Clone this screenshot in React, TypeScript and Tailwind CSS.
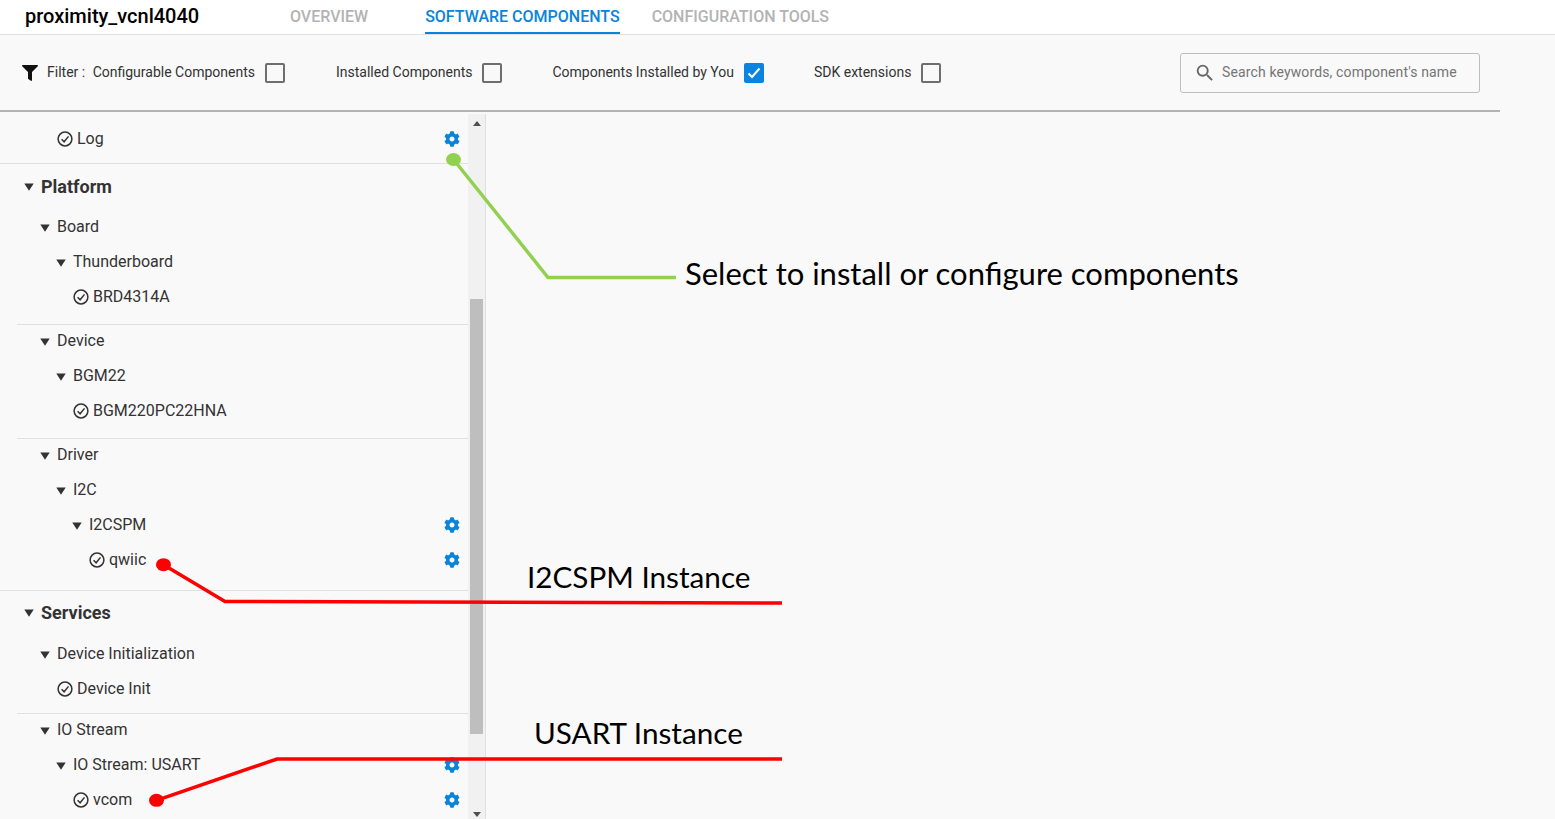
import React from "react";
import { FaCog, FaFilter } from "react-icons/fa";
import { MdSearch } from "react-icons/md";

function Tri({ className = "" }: { className?: string }) {
  return (
    <svg width="10" height="8" viewBox="0 0 10 8" className={"shrink-0 " + className}>
      <path d="M0.3 0.5H9.7L5 7.7Z" fill="#333333" />
    </svg>
  );
}

function CheckCircle() {
  return (
    <svg width="16" height="16" viewBox="0 0 16 16" className="shrink-0" fill="none" stroke="#333333">
      <circle cx="8" cy="8" r="6.9" strokeWidth="1.5" />
      <path d="M4.6 8.3L7.1 10.8L11.5 5.4" strokeWidth="1.5" />
    </svg>
  );
}

function Gear() {
  return <FaCog size={16} color="#0a84d9" className="shrink-0" />;
}

function Box({ checked = false }: { checked?: boolean }) {
  if (checked) {
    return (
      <span className="w-5 h-5 rounded-[2px] bg-[#0a84e0] flex items-center justify-center shrink-0">
        <svg width="14" height="12" viewBox="0 0 14 12" fill="none" stroke="#ffffff" strokeWidth="2">
          <path d="M1.5 6.5L5 10L12.5 1.5" />
        </svg>
      </span>
    );
  }
  return <span className="w-5 h-5 rounded-[2px] border-2 border-[#6e6e6e] shrink-0" />;
}

type RowProps = { label: string; indent: number; kind: "tri" | "check"; gear?: boolean };

function Row({ label, indent, kind, gear }: RowProps) {
  return (
    <div className="h-[35px] flex items-center pr-2 text-[16px] text-[#333333]" style={{ paddingLeft: indent }}>
      {kind === "tri" ? <Tri className="mr-[7px] mt-[2px]" /> : <CheckCircle />}
      <span className={kind === "tri" ? "" : "ml-1"}>{label}</span>
      {gear && (
        <span className="ml-auto">
          <Gear />
        </span>
      )}
    </div>
  );
}

function Heading({ label }: { label: string }) {
  return (
    <div className="h-[22px] flex items-center pl-6 text-[18px] font-bold text-[#333333]">
      <Tri className="mr-[7px] mt-[2px]" />
      <span>{label}</span>
    </div>
  );
}

function FilterItem({ label, checked, className = "" }: { label: string; checked?: boolean; className?: string }) {
  return (
    <div className={"flex items-center gap-[10px] " + className}>
      <span>{label}</span>
      <Box checked={checked} />
    </div>
  );
}

export default function App() {
  return (
    <div className="relative w-[1555px] h-[819px] overflow-hidden bg-[#f9f9f9] font-['Roboto',sans-serif]">
      <header className="h-[35px] bg-white border-b border-[#e0e0e0] flex">
        <div className="w-[290px] pl-[25px] text-[20px] font-medium text-black leading-[33px]">proximity_vcnl4040</div>
        <nav className="flex text-[16px] font-medium">
          <div className="text-[#b3b3b3] leading-[33px] mr-[57px]">OVERVIEW</div>
          <div className="text-[#0a84d9] leading-[33px] h-[34px] border-b-2 border-[#0a84d9] mr-8">SOFTWARE COMPONENTS</div>
          <div className="text-[#b3b3b3] leading-[33px]">CONFIGURATION TOOLS</div>
        </nav>
      </header>

      <div className="w-[1500px] h-[77px] border-b-2 border-[#b3b3b3] flex items-center pl-[22px] pr-5 text-[14px] text-[#333333]">
        <FaFilter size={16} color="#111111" className="shrink-0" />
        <span className="ml-[9px] mr-[7.5px]">Filter :</span>
        <FilterItem label="Configurable Components" className="mr-[51px]" />
        <FilterItem label="Installed Components" className="mr-[50px]" />
        <FilterItem label="Components Installed by You" checked className="mr-[50px]" />
        <FilterItem label="SDK extensions" />
        <div className="ml-auto w-[300px] h-10 rounded-[3px] border border-[#bdbdbd] flex items-center pl-[13px] text-[#757575]">
          <MdSearch size={22} color="#666666" className="shrink-0" />
          <span className="ml-[6px] tracking-[0.13px]">Search keywords, component's name</span>
        </div>
      </div>

      <div className="w-[486px] h-[708px] flex">
        <div className="w-[468px] shrink-0 overflow-hidden pt-[9px]">
          <Row label="Log" indent={57} kind="check" gear />
          <div className="h-px bg-[#e0e0e0] mt-[7px] mb-[11px]" />
          <Heading label="Platform" />
          <div className="h-[11px]" />
          <div className="pt-[1px]">
            <Row label="Board" indent={40} kind="tri" />
            <Row label="Thunderboard" indent={56} kind="tri" />
            <Row label="BRD4314A" indent={73} kind="check" />
          </div>
          <div className="h-px bg-[#e0e0e0] ml-[17px] mt-[10px] mb-[-2px]" />
          <Row label="Device" indent={40} kind="tri" />
          <Row label="BGM22" indent={56} kind="tri" />
          <Row label="BGM220PC22HNA" indent={73} kind="check" />
          <div className="h-px bg-[#e0e0e0] ml-[17px] mt-[10px] mb-[-2px]" />
          <Row label="Driver" indent={40} kind="tri" />
          <Row label="I2C" indent={56} kind="tri" />
          <Row label="I2CSPM" indent={72} kind="tri" gear />
          <Row label="qwiic" indent={89} kind="check" gear />
          <div className="h-px bg-[#e0e0e0] mt-[13px] mb-[10px]" />
          <Heading label="Services" />
          <div className="h-[13px]" />
          <Row label="Device Initialization" indent={40} kind="tri" />
          <Row label="Device Init" indent={57} kind="check" />
          <div className="h-px bg-[#e0e0e0] ml-[17px] mt-[7px] mb-[-2px]" />
          <Row label="IO Stream" indent={40} kind="tri" />
          <Row label="IO Stream: USART" indent={56} kind="tri" gear />
          <Row label="vcom" indent={73} kind="check" gear />
        </div>
        <div className="w-[18px] shrink-0 mt-[2px] bg-[#f1f1f1] border-r border-[#e0e0e0] flex flex-col items-center">
          <svg width="8" height="5" viewBox="0 0 8 5" className="mt-[7px]">
            <path d="M4 0L8 5H0Z" fill="#505050" />
          </svg>
          <div className="w-[13px] h-[435px] mt-[173px] bg-[#bebebe]" />
          <svg width="8" height="5" viewBox="0 0 8 5" className="mt-[78px]">
            <path d="M0 0H8L4 5Z" fill="#505050" />
          </svg>
        </div>
      </div>

      <svg width="1555" height="819" className="absolute inset-0 pointer-events-none" fill="none">
        <ellipse cx="453.5" cy="159.5" rx="7.5" ry="6.5" fill="#92d050" />
        <path d="M453.5 159.5L548 277.5H676" stroke="#92d050" strokeWidth="3.5" />
        <ellipse cx="163.5" cy="564.7" rx="7.5" ry="6.5" fill="#ff0000" />
        <path d="M163.5 564.7L225 601.5L782 603" stroke="#ff0000" strokeWidth="3.5" />
        <ellipse cx="156.5" cy="800.3" rx="7.5" ry="6.5" fill="#ff0000" />
        <path d="M156.5 800.3L277 759H782" stroke="#ff0000" strokeWidth="3.5" />
      </svg>

      <div className="absolute left-[685px] top-[253px] text-[31px] leading-[40px] text-black font-['Lato',sans-serif] whitespace-nowrap">
        Select to install or configure components
      </div>
      <div className="absolute left-[527px] top-[557px] text-[29.7px] leading-[40px] text-black font-['Lato',sans-serif] whitespace-nowrap">
        I2CSPM Instance
      </div>
      <div className="absolute left-[534px] top-[713px] text-[29.7px] leading-[40px] text-black font-['Lato',sans-serif] whitespace-nowrap">
        USART Instance
      </div>
    </div>
  );
}
